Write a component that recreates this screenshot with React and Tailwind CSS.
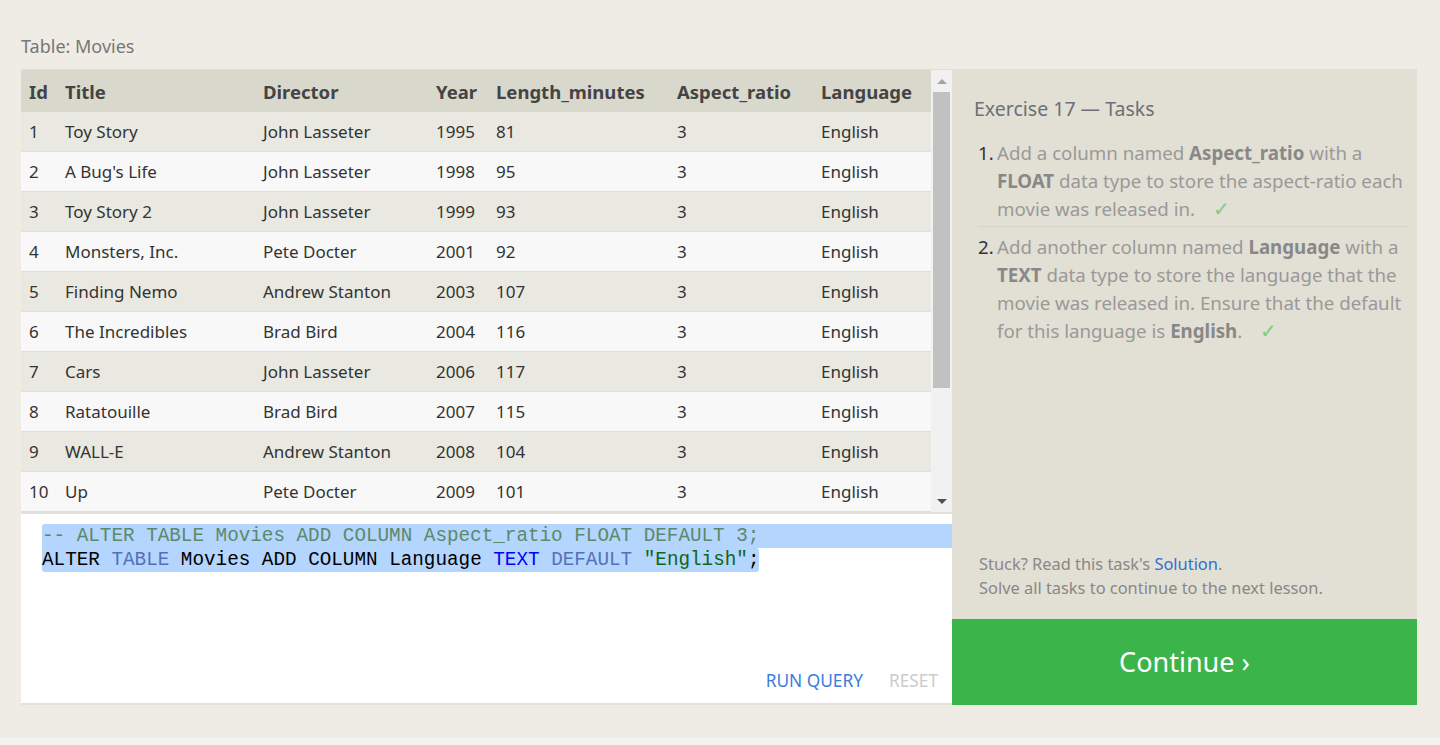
import React from 'react'

const movies = [
  [1, 'Toy Story', 'John Lasseter', 1995, 81],
  [2, "A Bug's Life", 'John Lasseter', 1998, 95],
  [3, 'Toy Story 2', 'John Lasseter', 1999, 93],
  [4, 'Monsters, Inc.', 'Pete Docter', 2001, 92],
  [5, 'Finding Nemo', 'Andrew Stanton', 2003, 107],
  [6, 'The Incredibles', 'Brad Bird', 2004, 116],
  [7, 'Cars', 'John Lasseter', 2006, 117],
  [8, 'Ratatouille', 'Brad Bird', 2007, 115],
  [9, 'WALL-E', 'Andrew Stanton', 2008, 104],
  [10, 'Up', 'Pete Docter', 2009, 101],
]

const cols = [
  { name: 'Id', w: 'w-[36px]' },
  { name: 'Title', w: 'w-[198px]' },
  { name: 'Director', w: 'w-[173px]' },
  { name: 'Year', w: 'w-[60px]' },
  { name: 'Length_minutes', w: 'w-[181px]' },
  { name: 'Aspect_ratio', w: 'w-[144px]' },
  { name: 'Language', w: 'w-[117px]' },
]

const Scrollbar = () => (
  <div className="w-[21px] bg-[#f1f1f1] flex flex-col items-center">
    <div className="h-[22px] flex items-center justify-center">
      <div className="w-0 h-0 border-l-[5px] border-r-[5px] border-b-[5px] border-l-transparent border-r-transparent border-b-[#a3a3a3]" />
    </div>
    <div className="w-[17px] h-[296px] bg-[#c1c1c1]" />
    <div className="flex-1" />
    <div className="h-[22px] flex items-center justify-center">
      <div className="w-0 h-0 border-l-[5px] border-r-[5px] border-t-[5px] border-l-transparent border-r-transparent border-t-[#505050]" />
    </div>
  </div>
)

const Check = () => <span className="ml-[18px] text-[20px] text-[#7ccf7c]">✓</span>

export default function App() {
  return (
    <div className="min-h-[745px] bg-[#f4f3ef] font-['Noto_Sans',sans-serif]">
      <div className="bg-[#efece5] h-[738px] pl-[21px] pt-[33px]">
        <div className="text-[18px] text-[#777] leading-[26px] mb-[10px]">Table: Movies</div>
        <div className="flex">
          <div className="w-[931px] flex flex-col border-t border-[#e0ded6]">
            <div className="flex h-[442px] bg-[#f8f8f8]">
              <div className="w-[910px]">
                <div className="flex h-[42px] bg-[#d9d8cc] items-center pt-[2px] text-[#444] font-bold text-[18.5px]">
                  {cols.map((c) => (
                    <div key={c.name} className={`${c.w} pl-2`}>{c.name}</div>
                  ))}
                </div>
                {movies.map((m, i) => (
                  <div
                    key={m[0]}
                    className={`flex h-[40px] items-center text-[17px] text-[#333] border-b border-[#dfded8] ${i % 2 === 0 ? 'bg-[#e9e8e1]' : 'bg-[#f8f8f8]'}`}
                  >
                    <div className="w-[36px] pl-2">{m[0]}</div>
                    <div className="w-[198px] pl-2">{m[1]}</div>
                    <div className="w-[173px] pl-2">{m[2]}</div>
                    <div className="w-[60px] pl-2">{m[3]}</div>
                    <div className="w-[181px] pl-2">{m[4]}</div>
                    <div className="w-[144px] pl-2">3</div>
                    <div className="w-[117px] pl-2">English</div>
                  </div>
                ))}
              </div>
              <Scrollbar />
            </div>
            <div className="h-[193px] bg-white border-t-2 border-[#e3e1da] border-b-2 border-b-[#e3e1da] flex flex-col">
              <div className="pt-[10px] pl-[21px] font-['Liberation_Mono',monospace] text-[19.3px] leading-[24px] whitespace-pre">
                <div className="bg-[#b4d5fe] rounded-tl-[3px] text-[#5a8a6a]">-- ALTER TABLE Movies ADD COLUMN Aspect_ratio FLOAT DEFAULT 3;</div>
                <div className="bg-[#b4d5fe] w-fit rounded-b-[3px] rounded-tr-[3px] text-black">
                  ALTER <span className="text-[#5570b8]">TABLE</span> Movies ADD COLUMN Language <span className="text-[#0000ff]">TEXT</span> <span className="text-[#5570b8]">DEFAULT</span> <span className="text-[#116611]">"English"</span>;
                </div>
              </div>
              <div className="flex-1" />
              <div className="flex justify-end gap-[26px] pr-[14px] pb-[10px] text-[17.3px] leading-[24px]">
                <span className="text-[#3b7ddd]">RUN QUERY</span>
                <span className="text-[#cccccc]">RESET</span>
              </div>
            </div>
          </div>
          <div className="w-[465px] flex flex-col">
            <div className="h-[550px] bg-[#e2dfd4] flex flex-col">
              <div className="pl-[22px] pt-[26px] text-[19.5px] text-[#6c7077] leading-[28px]">Exercise 17 — Tasks</div>
              <ol className="mt-[16px] pl-[26px] pr-[8px] text-[18.7px] leading-[28px] text-[#999]">
                <li className="flex border-b border-[#d5d2c7] pb-[3px]">
                  <span className="w-[19px] text-[#333]">1.</span>
                  <span className="flex-1">
                    Add a column named <b className="text-[#888]">Aspect_ratio</b> with a <b className="text-[#888]">FLOAT</b> data type to store the aspect-ratio each movie was released in.<Check />
                  </span>
                </li>
                <li className="flex pt-[6px]">
                  <span className="w-[19px] text-[#333]">2.</span>
                  <span className="flex-1">
                    Add another column named <b className="text-[#888]">Language</b> with a <b className="text-[#888]">TEXT</b> data type to store the language that the movie was released in. Ensure that the default for this language is <b className="text-[#888]">English</b>.<Check />
                  </span>
                </li>
              </ol>
              <div className="flex-1" />
              <div className="pl-[27px] pb-[19px] text-[16.4px] leading-[24px] text-[#888]">
                <div>Stuck? Read this task's <span className="text-[#2f6fd6]">Solution</span>.</div>
                <div>Solve all tasks to continue to the next lesson.</div>
              </div>
            </div>
            <div className="h-[86px] bg-[#3bb54a] flex items-center justify-center text-white text-[27px]">
              Continue ›
            </div>
          </div>
        </div>
      </div>
    </div>
  )
}
